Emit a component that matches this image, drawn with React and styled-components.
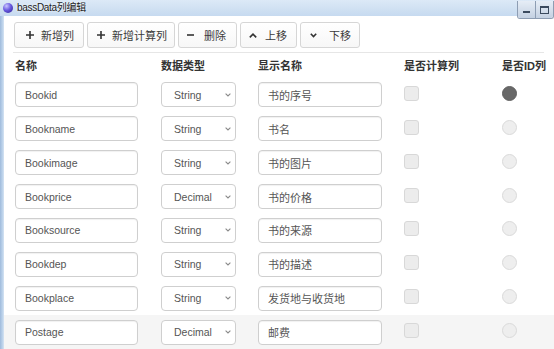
import React from 'react';
import styled, { createGlobalStyle } from 'styled-components';

const GlobalStyle = createGlobalStyle`
  html, body {
    margin: 0;
    padding: 0;
    background: #fff;
    overflow: hidden;
  }
  body {
    font-family: "Liberation Sans", "Noto Sans CJK SC", sans-serif;
    font-size: 11px;
    color: #555;
  }
`;

const Window = styled.div`
  width: 554px;
  height: 349px;
  display: flex;
  flex-direction: column;
  overflow: hidden;
`;

const TitleBar = styled.div`
  height: 16px;
  display: flex;
  align-items: flex-start;
  background: linear-gradient(to bottom, #dce9f7 0%, #cfe0f2 60%, #c6daf0 100%);
  flex-shrink: 0;
`;

const TitleIcon = styled.span`
  width: 10px;
  height: 10px;
  margin: 3px 4px 0 3px;
  border-radius: 50%;
  background: radial-gradient(circle at 35% 30%, #c9c6ff 0%, #6a5be0 45%, #2b1f8f 100%);
`;

const TitleText = styled.span`
  margin-top: 2px;
  font-size: 10px;
  line-height: 12px;
  color: #1c1c1c;
  letter-spacing: -0.3px;
  text-shadow: 0 0 3px #fff;
`;

const WinControls = styled.div`
  margin-left: auto;
  margin-top: 1px;
  display: flex;
  height: 17px;
  border: 1px solid #8d9db3;
  border-top: none;
  border-radius: 0 0 3px 3px;
  overflow: hidden;
`;

const WinButton = styled.span`
  width: 17px;
  display: flex;
  align-items: center;
  justify-content: center;
  background: linear-gradient(to bottom, #e6edf6, #c4d1e2);
  & + & {
    border-left: 1px solid #8d9db3;
  }
`;

const MinGlyph = styled.span`
  width: 7px;
  height: 2px;
  margin-top: 5px;
  background: #3b4a5e;
`;

const MaxGlyph = styled.span`
  width: 7px;
  height: 5px;
  border: 1px solid #3b4a5e;
  border-top-width: 2px;
`;

const Body = styled.div`
  flex: 1;
  display: flex;
  min-height: 0;
`;

const Frame = styled.div`
  width: 4px;
  flex-shrink: 0;
  background: linear-gradient(to right, #9fbbdc, #bcd2ea 60%, #d6e4f3);
`;

const Main = styled.div`
  flex: 1;
  display: flex;
  flex-direction: column;
  min-width: 0;
`;

const Toolbar = styled.div`
  display: flex;
  gap: 3px;
  padding: 6px 0 0 10px;
`;

const ToolButton = styled.button`
  height: 26px;
  display: flex;
  align-items: center;
  gap: ${p => p.$gap}px;
  padding: 0 ${p => p.$pr}px 0 ${p => p.$pl}px;
  border: 1px solid #d6d6d6;
  border-radius: 3px;
  background: linear-gradient(to bottom, #ffffff, #f7f7f7);
  font-family: inherit;
  font-size: 11px;
  color: #3a3a3a;
  cursor: pointer;
`;

const Divider = styled.div`
  margin: 4px 10px 0 9px;
  border-top: 1px solid #e6e6e6;
`;

const Row = styled.div`
  display: grid;
  grid-template-columns: 146px 97px 146px 98px 1fr;
  align-items: center;
  height: ${p => (p.$head ? 25 : 34)}px;
  padding-left: 11px;
  background: ${p => (p.$hover ? '#f5f5f5' : 'transparent')};
`;

const HeadCell = styled.div`
  font-weight: bold;
  color: #333;
  font-size: 11px;
`;

const TextBox = styled.div`
  box-sizing: border-box;
  width: ${p => p.$w}px;
  height: 25px;
  display: flex;
  align-items: center;
  padding-left: 9px;
  border: 1px solid #cfcfcf;
  border-radius: 4px;
  background: #fff;
  box-shadow: inset 0 1px 1px rgba(0, 0, 0, 0.06);
  color: #555;
  font-size: ${p => p.$fs || 11}px;
  white-space: nowrap;
`;

const SelectBox = styled.div`
  box-sizing: border-box;
  width: 75px;
  height: 25px;
  display: flex;
  align-items: center;
  justify-content: space-between;
  padding: 0 4px 0 12px;
  border: 1px solid #cfcfcf;
  border-radius: 4px;
  background: #fff;
  color: #555;
  font-size: 10.5px;
`;

const Check = styled.span`
  box-sizing: border-box;
  width: 15px;
  height: 15px;
  margin-bottom: 3px;
  border: 1px solid #d8d8d8;
  border-radius: 3px;
  background: #ececec;
`;

const Radio = styled.span`
  box-sizing: border-box;
  width: 15px;
  height: 15px;
  margin-bottom: 3px;
  border-radius: 50%;
  border: 1px solid ${p => (p.$on ? '#616161' : '#dadada')};
  background: ${p => (p.$on ? '#686868' : '#eeeeee')};
`;

const Chevron = () => (
  <svg width="6" height="4" viewBox="0 0 6 4">
    <path d="M0.6 0.6 L3 3 L5.4 0.6" fill="none" stroke="#8a8a8a" strokeWidth="1.1" />
  </svg>
);

const icons = {
  plus: { w: 8, h: 8, d: 'M4 0 V8 M0 4 H8' },
  minus: { w: 7, h: 8, d: 'M0 4 H7' },
  up: { w: 8, h: 5, d: 'M0.8 4.4 L4 1.2 L7.2 4.4' },
  down: { w: 7, h: 5, d: 'M0.8 0.8 L3.5 3.6 L6.2 0.8' },
};

const ToolIcon = ({ kind }) => {
  const i = icons[kind];
  return (
    <svg width={i.w} height={i.h} viewBox={`0 0 ${i.w} ${i.h}`}>
      <path d={i.d} fill="none" stroke="#333" strokeWidth="1.6" />
    </svg>
  );
};

const tools = [
  { kind: 'plus', text: '新增列', pl: 11, gap: 7, pr: 9 },
  { kind: 'plus', text: '新增计算列', pl: 9, gap: 7, pr: 7 },
  { kind: 'minus', text: '删除', pl: 8, gap: 10, pr: 10 },
  { kind: 'up', text: '上移', pl: 8, gap: 8, pr: 9 },
  { kind: 'down', text: '下移', pl: 9, gap: 12, pr: 8 },
];

const rows = [
  { name: 'Bookid', type: 'String', label: '书的序号', id: true },
  { name: 'Bookname', type: 'String', label: '书名' },
  { name: 'Bookimage', type: 'String', label: '书的图片' },
  { name: 'Bookprice', type: 'Decimal', label: '书的价格' },
  { name: 'Booksource', type: 'String', label: '书的来源' },
  { name: 'Bookdep', type: 'String', label: '书的描述' },
  { name: 'Bookplace', type: 'String', label: '发货地与收货地' },
  { name: 'Postage', type: 'Decimal', label: '邮费', hover: true },
];

const App = () => (
  <Window>
    <GlobalStyle />
    <TitleBar>
      <TitleIcon />
      <TitleText>bassData列编辑</TitleText>
      <WinControls>
        <WinButton><MinGlyph /></WinButton>
        <WinButton><MaxGlyph /></WinButton>
      </WinControls>
    </TitleBar>
    <Body>
      <Frame />
      <Main>
        <Toolbar>
          {tools.map(t => (
            <ToolButton key={t.text} $pl={t.pl} $pr={t.pr} $gap={t.gap}>
              <ToolIcon kind={t.kind} />
              {t.text}
            </ToolButton>
          ))}
        </Toolbar>
        <Divider />
        <Row $head>
          <HeadCell>名称</HeadCell>
          <HeadCell>数据类型</HeadCell>
          <HeadCell>显示名称</HeadCell>
          <HeadCell>是否计算列</HeadCell>
          <HeadCell>是否ID列</HeadCell>
        </Row>
        {rows.map(r => (
          <Row key={r.name} $hover={r.hover}>
            <TextBox $w={123} $fs={10.5}>{r.name}</TextBox>
            <SelectBox>
              <span>{r.type}</span>
              <Chevron />
            </SelectBox>
            <TextBox $w={124}>{r.label}</TextBox>
            <Check />
            <Radio $on={r.id} />
          </Row>
        ))}
      </Main>
    </Body>
  </Window>
);

export default App;
